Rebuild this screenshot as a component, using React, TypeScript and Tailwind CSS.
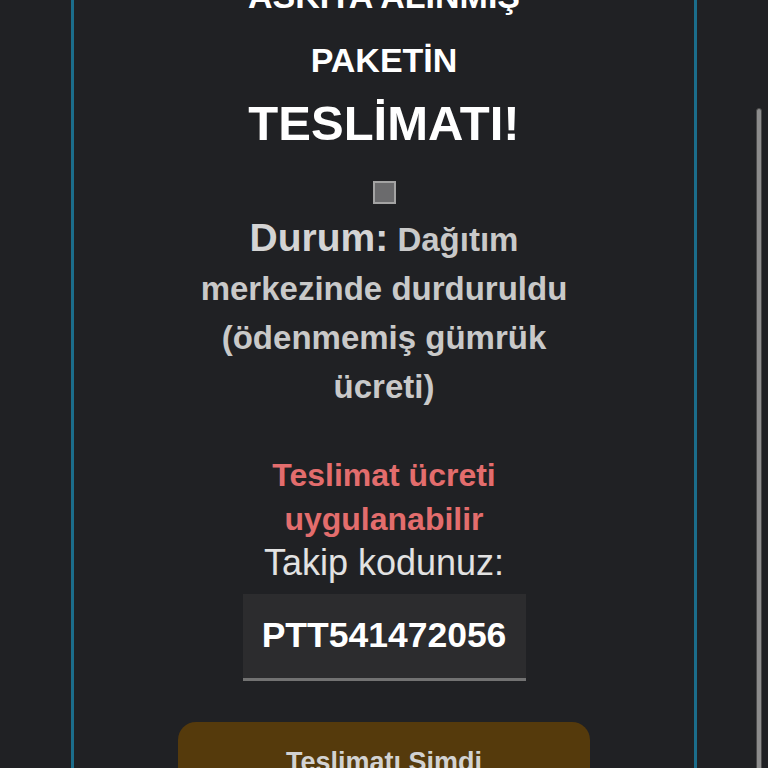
import React from "react";

const App: React.FC = () => {
  return (
    <div className="relative h-[768px] overflow-hidden bg-[#202124] font-['Liberation_Sans',Arial,sans-serif]">
      {/* page is scrolled down a bit, so the first heading line is cut off */}
      <div className="mx-auto -mt-[36px] w-[626px] border-x-[3px] border-[#1b6d8b] pb-10 text-center">
        <h1 className="text-[34px] font-bold leading-[64px] text-white">
          ASKIYA ALINMIŞ
          <br />
          PAKETİN
        </h1>
        <div className="mt-[2px] text-[49px] font-bold leading-[58px] text-white">
          TESLİMATI!
        </div>

        <div className="mt-[29px] flex justify-center">
          <div className="h-[23px] w-[23px] border-2 border-[#a3a3a3] bg-[#6b6b6d]" />
        </div>

        <p className="mx-auto mt-[9px] w-[420px] text-[33px] font-bold leading-[49px] text-[#c9c9c9]">
          <span className="text-[39px] text-[#d4d4d4]">Durum:</span> Dağıtım
          merkezinde durduruldu (ödenmemiş gümrük ücreti)
        </p>

        <p className="mx-auto mt-[42px] w-[300px] text-[32px] font-bold leading-[44px] text-[#e36d6d]">
          Teslimat ücreti uygulanabilir
        </p>
        <p className="text-[36px] leading-[44px] text-[#e2e2e2]">Takip kodunuz:</p>

        <div className="mt-[9px] flex justify-center">
          <div className="flex h-[87px] w-[283px] items-center justify-center border-b-[3px] border-[#727272] bg-[#2c2c2e] text-[35.5px] font-bold text-white">
            PTT541472056
          </div>
        </div>

        <div className="mt-[41px] flex justify-center">
          <button className="w-[412px] rounded-[18px] bg-[#553a0c] px-[60px] pb-6 pt-[22px] text-[27px] font-bold leading-[36px] text-[#d2d2d2]">
            Teslimatı Şimdi Ödeyin
          </button>
        </div>
      </div>

      {/* overlay scrollbar thumb */}
      <div className="absolute right-[6px] top-[108px] h-[680px] w-[6px] rounded-full border border-[#4a4a4a] bg-[#8c8c8c]" />
    </div>
  );
};

export default App;
